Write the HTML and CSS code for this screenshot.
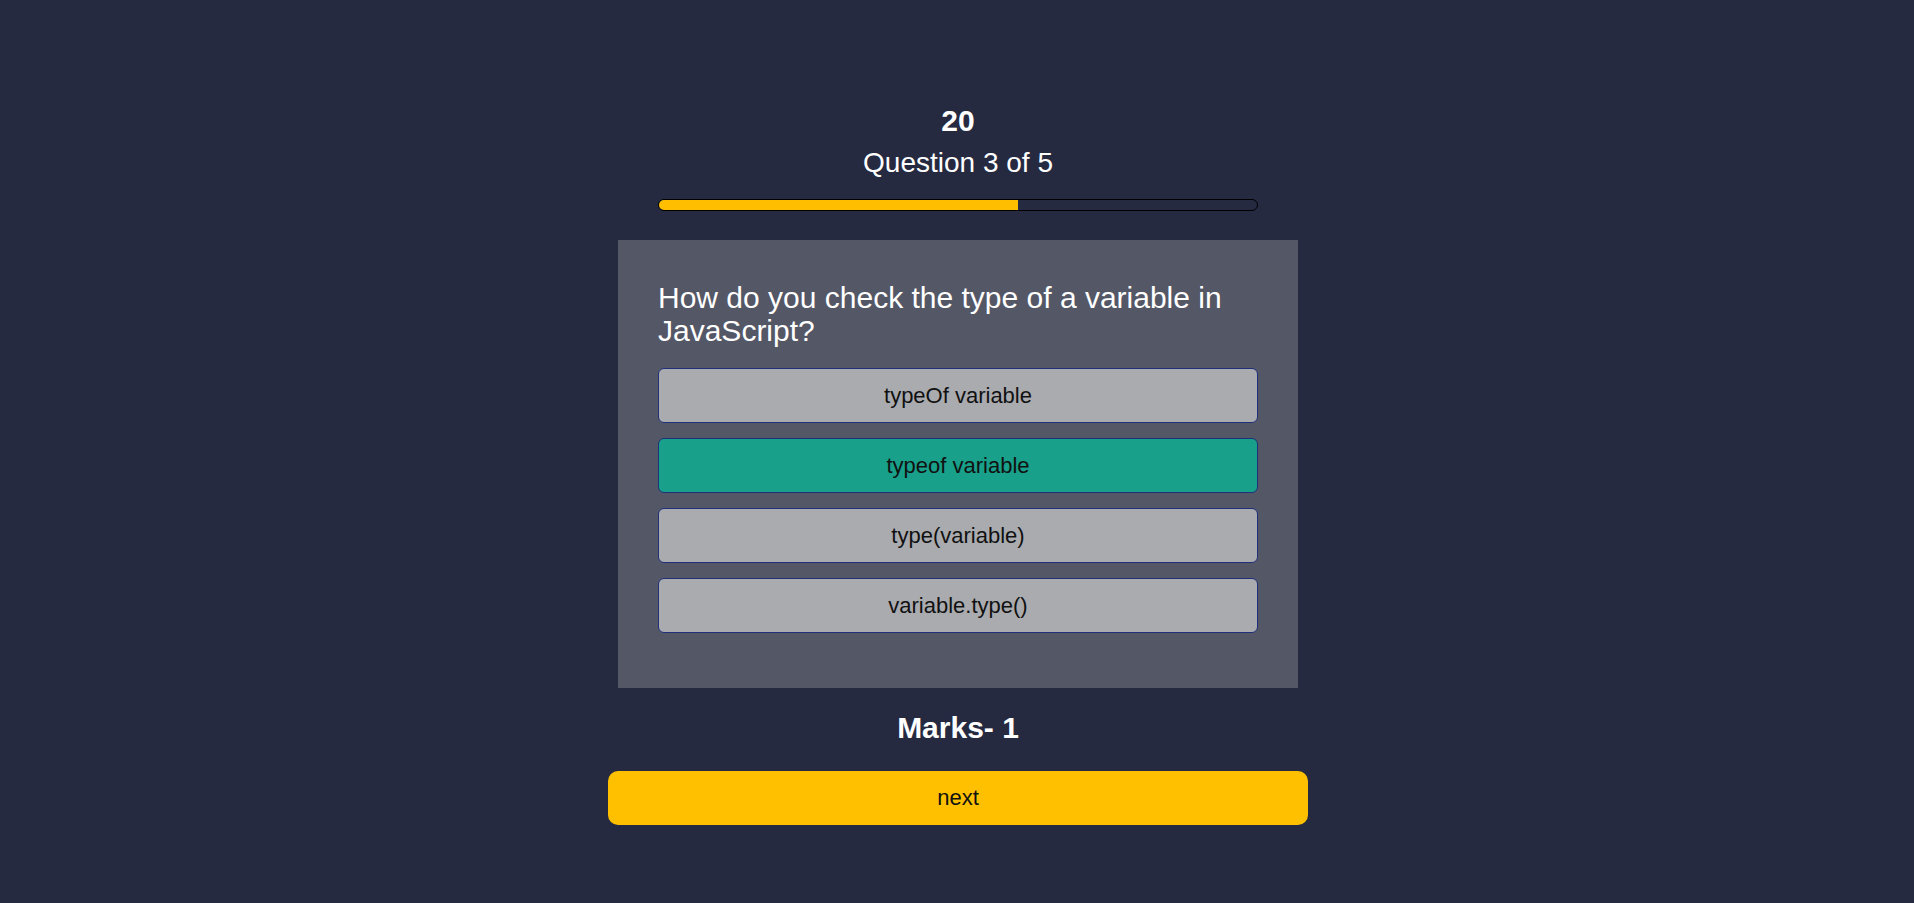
FILE: index.html
```html
<!DOCTYPE html>
<html lang="en">
<head>
<meta charset="utf-8">
<title>Quiz</title>
<link rel="stylesheet" href="styles.css">
</head>
<body>
<main class="quiz">
  <div class="timer">20</div>
  <div class="counter">Question 3 of 5</div>
  <div class="progress"><div class="progress-fill" style="width: 60%"></div></div>
  <section class="card">
    <h2 class="question">How do you check the type of a variable in JavaScript?</h2>
    <div class="options">
      <button class="option">typeOf variable</button>
      <button class="option option-selected">typeof variable</button>
      <button class="option">type(variable)</button>
      <button class="option">variable.type()</button>
    </div>
  </section>
  <div class="marks">Marks- 1</div>
  <button class="next">next</button>
</main>
</body>
</html>
```
FILE: styles.css
```css
* { box-sizing: border-box; }
html, body {
  margin: 0;
  padding: 0;
  background: #252a41;
  font-family: "Liberation Sans", Arial, sans-serif;
  color: #ffffff;
}
.quiz {
  display: flex;
  flex-direction: column;
  align-items: center;
  padding: 104px 0 0 2px;
}
.timer {
  font-size: 30px;
  font-weight: bold;
  line-height: 34px;
}
.counter {
  margin-top: 9px;
  font-size: 28px;
  line-height: 32px;
}
.progress {
  margin-top: 20px;
  width: 600px;
  height: 12px;
  border: 1px solid #000000;
  border-radius: 6px;
  overflow: hidden;
  background: #252a41;
}
.progress-fill {
  height: 100%;
  background: #ffbf00;
}
.card {
  margin-top: 29px;
  width: 680px;
  padding: 41px 40px 40px;
  background: #545766;
}
.question {
  margin: 0;
  font-size: 30px;
  font-weight: normal;
  line-height: 33px;
  color: #ffffff;
}
.options {
  margin-top: 21px;
  display: flex;
  flex-direction: column;
}
.option {
  height: 55px;
  margin-bottom: 15px;
  width: 100%;
  border: 1px solid #1f2f7a;
  border-radius: 6px;
  background: #aaabaf;
  color: #111111;
  font-family: "Liberation Sans", Arial, sans-serif;
  font-size: 22px;
  cursor: pointer;
}
.option-selected {
  background: #18a08a;
}
.marks {
  margin-top: 23px;
  font-size: 30px;
  font-weight: bold;
  line-height: 34px;
}
.next {
  margin-top: 26px;
  width: 700px;
  height: 54px;
  border: none;
  border-radius: 10px;
  background: #ffc000;
  color: #111111;
  font-family: "Liberation Sans", Arial, sans-serif;
  font-size: 22px;
  cursor: pointer;
}
```
